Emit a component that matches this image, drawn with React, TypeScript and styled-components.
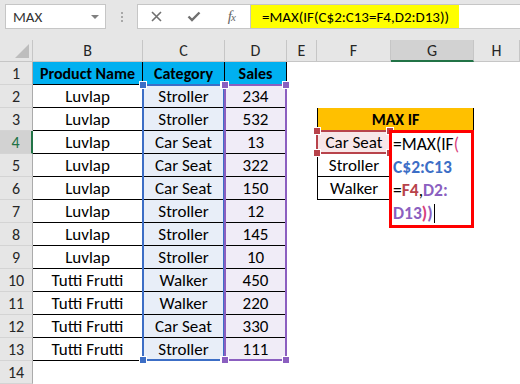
import React from 'react'
import styled, { createGlobalStyle } from 'styled-components'

const FONT = `Carlito, Lato, 'Liberation Sans', sans-serif`

const GlobalStyle = createGlobalStyle`
  * { box-sizing: border-box; }
  body {
    margin: 0;
    background: #fff;
  }
`

const Window = styled.div`
  width: 520px;
  height: 384px;
  overflow: hidden;
  font-family: ${FONT};
  color: #000;
`

const FormulaBar = styled.div`
  height: 40px;
  background: #e6e6e6;
  display: flex;
  align-items: flex-start;
  padding: 4px 0 0 5px;
`

const NameBox = styled.div`
  width: 101px;
  height: 25px;
  background: #fff;
  border: 1px solid #c6c6c6;
  display: flex;
  align-items: center;
  justify-content: space-between;
  padding: 0 6px 0 7px;
  font-size: 15px;
  color: #333;
`

const Caret = styled.span`
  width: 0;
  height: 0;
  border-left: 4px solid transparent;
  border-right: 4px solid transparent;
  border-top: 4px solid #808080;
`

const Grip = styled.div`
  width: 31px;
  height: 25px;
  display: flex;
  flex-direction: column;
  align-items: center;
  justify-content: center;
  gap: 2px;
`

const GripDot = styled.span`
  width: 2px;
  height: 2px;
  background: #a8a8a8;
`

const ButtonBox = styled.div`
  width: 113px;
  height: 25px;
  background: #fff;
  border: 1px solid #c6c6c6;
  border-right: none;
  display: flex;
  align-items: center;
`

const BarButton = styled.span`
  flex: 1;
  display: flex;
  justify-content: center;
  align-items: center;
`

const Fx = styled.span`
  font-family: 'Liberation Serif', serif;
  font-style: italic;
  font-size: 15px;
  color: #666;
  letter-spacing: -1px;

  sub {
    font-size: 11px;
    vertical-align: 0;
  }
`

const FormulaInput = styled.div`
  flex: 1;
  height: 25px;
  background: #fff;
  border: 1px solid #c6c6c6;
  border-right: none;
  display: flex;
  align-items: stretch;
`

const Highlight = styled.span`
  background: #ffff00;
  display: flex;
  align-items: center;
  padding: 0 10px 0 11px;
  font-size: 15px;
`

const Sheet = styled.div`
  display: grid;
  grid-template-columns: 33px 110px 82px 62px 30px 74px 83px 1fr;
  grid-template-rows: 22px repeat(14, 23px);
  font-size: 17px;
`

const Corner = styled.div`
  grid-row: 1;
  grid-column: 1;
  background: #e6e6e6;
  border-right: 1px solid #c6c6c6;
  border-bottom: 1px solid #c6c6c6;
  display: flex;
  align-items: flex-end;
  justify-content: flex-end;
  padding: 0 3px 3px 0;

  &::after {
    content: '';
    width: 0;
    height: 0;
    border-left: 14px solid transparent;
    border-bottom: 14px solid #bdbdbd;
  }
`

const ColHead = styled.div<{ $col: number; $active?: boolean }>`
  grid-row: 1;
  grid-column: ${({ $col }) => $col};
  background: ${({ $active }) => ($active ? '#d2d2d2' : '#e6e6e6')};
  border-right: 1px solid #c6c6c6;
  border-bottom: ${({ $active }) => ($active ? '2px solid #217346' : '1px solid #c6c6c6')};
  display: flex;
  align-items: center;
  justify-content: center;
  font-size: 16px;
  color: #262626;
`

const RowHead = styled.div<{ $row: number; $active?: boolean }>`
  grid-row: ${({ $row }) => $row + 1};
  grid-column: 1;
  background: ${({ $active }) => ($active ? '#d2d2d2' : '#e6e6e6')};
  border-right: ${({ $active }) => ($active ? '2px solid #217346' : '1px solid #ababab')};
  border-bottom: 1px solid #d4d4d4;
  display: flex;
  align-items: center;
  justify-content: center;
  font-size: 16px;
  color: ${({ $active }) => ($active ? '#217346' : '#262626')};
`

const Cell = styled.div<{ $row: number; $col: number; $span?: number; $bg?: string; $bold?: boolean; $box?: boolean }>`
  grid-row: ${({ $row }) => $row + 1};
  grid-column: ${({ $col, $span }) => `${$col} / span ${$span || 1}`};
  background: ${({ $bg }) => $bg || '#fff'};
  font-weight: ${({ $bold }) => ($bold ? 700 : 400)};
  font-size: ${({ $bold }) => ($bold ? '16px' : '17px')};
  border-right: 1px solid #000;
  border-bottom: 1px solid #000;
  border-left: ${({ $box }) => ($box ? '1px solid #000' : 'none')};
  display: flex;
  align-items: center;
  justify-content: center;
  white-space: nowrap;
`

const RangeBox = styled.div<{ $row: number; $rows: number; $col: number; $color: string }>`
  grid-row: ${({ $row, $rows }) => `${$row + 1} / span ${$rows}`};
  grid-column: ${({ $col }) => $col};
  margin: -1px 0 0 -1px;
  border: 2px solid ${({ $color }) => $color};
  position: relative;
  z-index: 2;
  pointer-events: none;
`

const Handle = styled.span<{ $color: string; $v: 'top' | 'bottom'; $h: 'left' | 'right' }>`
  position: absolute;
  ${({ $v }) => $v}: -5px;
  ${({ $h }) => $h}: -5px;
  width: 8px;
  height: 8px;
  background: ${({ $color }) => $color};
  border: 1px solid #fff;
`

const EditBox = styled.div`
  grid-row: 5 / span 4;
  grid-column: 7;
  margin: -1px 0 -5px -2px;
  border: 3px solid #ff0000;
  background: #fff;
  position: relative;
  z-index: 3;
  padding: 0 0 0 1px;
  font-size: 17.5px;
  line-height: 23px;
  white-space: nowrap;
`

const Ref = styled.span<{ $color: string; $bold?: boolean }>`
  color: ${({ $color }) => $color};
  font-weight: ${({ $bold }) => ($bold ? 700 : 400)};
`

const Caret2 = styled.span`
  display: inline-block;
  width: 1px;
  height: 19px;
  background: #000;
  vertical-align: -4px;
  margin-left: 1px;
`

const BLUE = '#3c6ec6'
const PURPLE = '#8b5fc0'
const RED = '#b8434b'
const PINK = '#d8407c'

const rows: [string, string, number][] = [
  ['Luvlap', 'Stroller', 234],
  ['Luvlap', 'Stroller', 532],
  ['Luvlap', 'Car Seat', 13],
  ['Luvlap', 'Car Seat', 322],
  ['Luvlap', 'Car Seat', 150],
  ['Luvlap', 'Stroller', 12],
  ['Luvlap', 'Stroller', 145],
  ['Luvlap', 'Stroller', 10],
  ['Tutti Frutti', 'Walker', 450],
  ['Tutti Frutti', 'Walker', 220],
  ['Tutti Frutti', 'Car Seat', 330],
  ['Tutti Frutti', 'Stroller', 111],
]

const cols = ['B', 'C', 'D', 'E', 'F', 'G', 'H']

const Handles = ({ color }: { color: string }) => (
  <>
    <Handle $color={color} $v="top" $h="left" />
    <Handle $color={color} $v="top" $h="right" />
    <Handle $color={color} $v="bottom" $h="left" />
    <Handle $color={color} $v="bottom" $h="right" />
  </>
)

const App: React.FC = () => {
  return (
    <Window>
      <GlobalStyle />
      <FormulaBar>
        <NameBox>
          MAX
          <Caret />
        </NameBox>
        <Grip>
          <GripDot />
          <GripDot />
          <GripDot />
        </Grip>
        <ButtonBox>
          <BarButton>
            <svg width="11" height="11" viewBox="0 0 11 11">
              <path d="M1 1 L10 10 M10 1 L1 10" stroke="#707070" strokeWidth="1.6" />
            </svg>
          </BarButton>
          <BarButton>
            <svg width="14" height="11" viewBox="0 0 14 11">
              <path d="M1.5 5.5 L5 9 L12.5 1.5" stroke="#707070" strokeWidth="2.4" fill="none" />
            </svg>
          </BarButton>
          <BarButton>
            <Fx>
              f<sub>x</sub>
            </Fx>
          </BarButton>
        </ButtonBox>
        <FormulaInput>
          <Highlight>=MAX(IF(C$2:C13=F4,D2:D13))</Highlight>
        </FormulaInput>
      </FormulaBar>

      <Sheet>
        <Corner />
        {cols.map((c, i) => (
          <ColHead key={c} $col={i + 2} $active={c === 'G'}>
            {c}
          </ColHead>
        ))}
        {Array.from({ length: 14 }, (_, i) => (
          <RowHead key={i} $row={i + 1} $active={i + 1 === 4}>
            {i + 1}
          </RowHead>
        ))}

        <Cell $row={1} $col={2} $bg="#00b0f0" $bold>Product Name</Cell>
        <Cell $row={1} $col={3} $bg="#00b0f0" $bold>Category</Cell>
        <Cell $row={1} $col={4} $bg="#00b0f0" $bold>Sales</Cell>
        {rows.map(([name, cat, sales], i) => (
          <React.Fragment key={i}>
            <Cell $row={i + 2} $col={2}>{name}</Cell>
            <Cell $row={i + 2} $col={3} $bg="#e8eef8">{cat}</Cell>
            <Cell $row={i + 2} $col={4} $bg="#f0ecf7">{sales}</Cell>
          </React.Fragment>
        ))}

        <Cell $row={3} $col={6} $span={2} $bg="#ffc000" $bold $box>MAX IF</Cell>
        <Cell $row={4} $col={6} $bg="#f8e7e8" $box>Car Seat</Cell>
        <Cell $row={5} $col={6} $box>Stroller</Cell>
        <Cell $row={6} $col={6} $box>Walker</Cell>

        <RangeBox $row={2} $rows={12} $col={3} $color={BLUE}>
          <Handles color={BLUE} />
        </RangeBox>
        <RangeBox $row={2} $rows={12} $col={4} $color={PURPLE}>
          <Handles color={PURPLE} />
        </RangeBox>
        <RangeBox $row={4} $rows={1} $col={6} $color={RED}>
          <Handles color={RED} />
        </RangeBox>

        <EditBox>
          =MAX(IF<Ref $color={PINK}>(</Ref>
          <br />
          <Ref $color={BLUE} $bold>C$2:C13</Ref>
          <br />
          =<Ref $color={RED} $bold>F4</Ref>,<Ref $color={PURPLE} $bold>D2:</Ref>
          <br />
          <Ref $color={PURPLE} $bold>D13</Ref>
          <Ref $color={PINK} $bold>)</Ref>
          <Ref $color={PURPLE} $bold>)</Ref>
          <Caret2 />
        </EditBox>
      </Sheet>
    </Window>
  )
}

export default App
